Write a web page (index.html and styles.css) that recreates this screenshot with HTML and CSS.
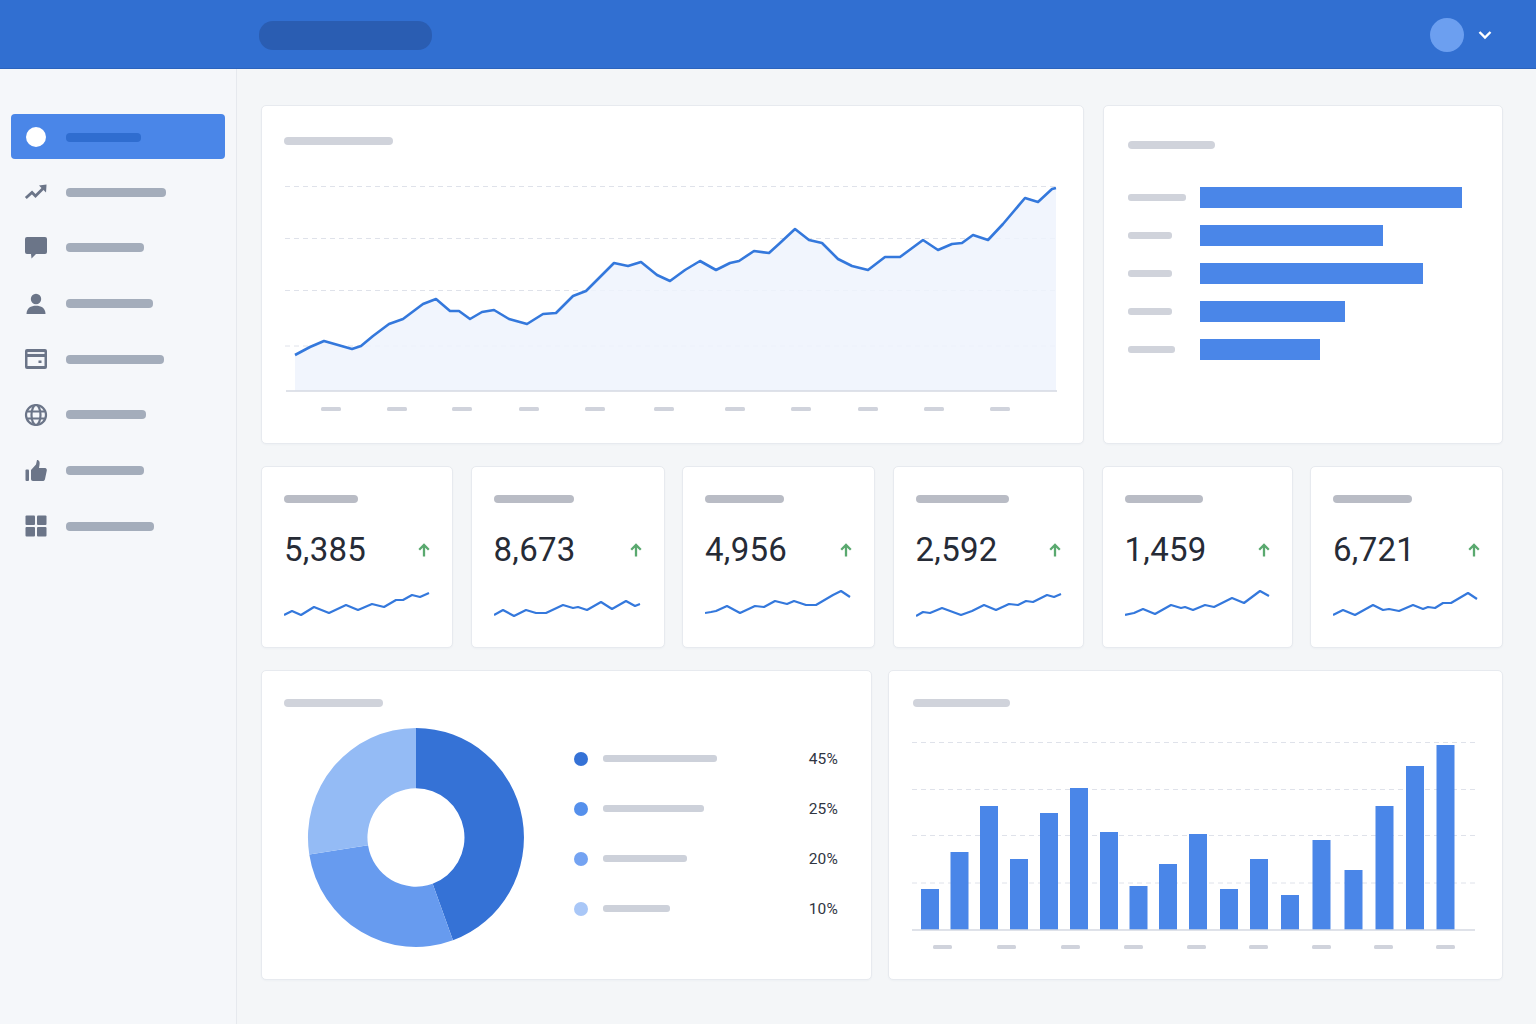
FILE: index.html
```html
<!DOCTYPE HTML><html>
<head>
  <title>Dashboard</title>
  <meta name="viewport" content="width=device-width, initial-scale=1">
  <meta charset="UTF-8">
  <link rel="stylesheet" href="styles.css">
</head>
<body>
  <header class="topbar">
    <div class="search-pill"></div>
    <div class="user">
      <span class="avatar"></span>
      <svg class="chevron" width="14" height="10" viewBox="0 0 14 10"><path d="M1.500 2 L7 7.500 L12.500 2" fill="none" stroke="#fff" stroke-width="2.400"/></svg>
    </div>
  </header>

  <div class="layout">
    <nav class="sidebar">
      <a class="nav-item active"><span class="nav-dot"></span><span class="nav-bar" style="width:75px"></span></a>
      <a class="nav-item">
        <svg class="nav-icon" viewBox="0 0 24 24"><path d="M1.800 18 L8 12.500 L11.500 16 L19 8.500" fill="none" stroke="#6b7588" stroke-width="2.800"/><path d="M15 5.500 L22.500 4.500 L22 12.500Z" fill="#6b7588"/></svg>
        <span class="nav-bar" style="width:100px"></span>
      </a>
      <a class="nav-item">
        <svg class="nav-icon" viewBox="0 0 24 24"><path d="M3 1 H21 A2 2 0 0 1 23 3 V16 A2 2 0 0 1 21 18 H12 L7.500 22.500 L7 18 H3 A2 2 0 0 1 1 16 V3 A2 2 0 0 1 3 1Z" fill="#6b7588"/></svg>
        <span class="nav-bar" style="width:78px"></span>
      </a>
      <a class="nav-item">
        <svg class="nav-icon" viewBox="0 0 24 24"><circle cx="12" cy="7" r="5.200" fill="#6b7588"/><path d="M2.500 22 C2.500 16 7 13.800 12 13.800 C17 13.800 21.500 16 21.500 22Z" fill="#6b7588"/></svg>
        <span class="nav-bar" style="width:87px"></span>
      </a>
      <a class="nav-item">
        <svg class="nav-icon" viewBox="0 0 24 24"><rect x="1" y="2" width="22" height="20" rx="2" fill="#6b7588"/><rect x="3.500" y="5" width="17" height="2" fill="#eef0f4"/><rect x="3.500" y="10" width="17" height="9" fill="#f5f7fa"/><rect x="14.500" y="13.500" width="3" height="2.500" fill="#6b7588"/></svg>
        <span class="nav-bar" style="width:98px"></span>
      </a>
      <a class="nav-item">
        <svg class="nav-icon" viewBox="0 0 24 24" fill="none" stroke="#6b7588" stroke-width="2.200"><circle cx="12" cy="12" r="10"/><ellipse cx="12" cy="12" rx="4.500" ry="10"/><path d="M2.500 8.500 H21.500 M2.500 15.500 H21.500"/></svg>
        <span class="nav-bar" style="width:80px"></span>
      </a>
      <a class="nav-item">
        <svg class="nav-icon" viewBox="0 0 24 24"><rect x="1.500" y="10.500" width="3.500" height="11.500" rx="1" fill="#6b7588"/><path d="M7 11 L12 5.500 L13 1 C15.500 1 16 3.500 15.500 6 L15 9 H21 C22.500 9 23 10.500 22.800 11.500 L21 20 C20.700 21.500 20 22 18.500 22 H9 C7.800 22 7 21.200 7 20Z" fill="#6b7588"/></svg>
        <span class="nav-bar" style="width:78px"></span>
      </a>
      <a class="nav-item">
        <svg class="nav-icon" viewBox="0 0 24 24" fill="#6b7588"><rect x="1.500" y="1.500" width="9.500" height="9.500" rx="1"/><rect x="13" y="1.500" width="9.500" height="9.500" rx="1"/><rect x="1.500" y="13" width="9.500" height="9.500" rx="1"/><rect x="13" y="13" width="9.500" height="9.500" rx="1"/></svg>
        <span class="nav-bar" style="width:88px"></span>
      </a>
    </nav>

    <main class="content">
      <section class="row row-top">
        <div class="card card-line">
          <div class="title-bar" style="width:109px"></div>
          <svg class="chart" width="800" height="250" viewBox="270 170 800 250">
            <g stroke="#dfe2ea" stroke-width="1" stroke-dasharray="5 4">
              <path d="M285 186.500 H1057 M285 238.500 H1057 M285 290.500 H1057 M285 346 H1057"/>
            </g>
            <path fill="#eef3fd" fill-opacity="0.85" d="M295 355 L310 347 L324 341 L338 345 L352 349 L361 346 L373 336 L389 324 L403 319 L423 304 L436 299 L450 311 L459 311 L470 319 L482 312 L494 310 L509 319 L527 324 L543 314 L556 313 L573 296 L586 291 L614 263 L628 266 L641 262 L657 275 L670 281 L685 270 L700 261 L716 270 L730 263 L739 261 L754 251 L769 253 L780 243 L795 229 L809 240 L822 243 L838 259 L852 266 L868 270 L885 257 L900 257 L923 240 L938 250 L952 244 L962 243 L973 235 L988 240 L1003 224 L1025 198 L1038 202 L1052 189 L1056 188 V391 H295Z"/>
            <path fill="none" stroke="#3478dc" stroke-width="2.600" stroke-linejoin="round" d="M295 355 L310 347 L324 341 L338 345 L352 349 L361 346 L373 336 L389 324 L403 319 L423 304 L436 299 L450 311 L459 311 L470 319 L482 312 L494 310 L509 319 L527 324 L543 314 L556 313 L573 296 L586 291 L614 263 L628 266 L641 262 L657 275 L670 281 L685 270 L700 261 L716 270 L730 263 L739 261 L754 251 L769 253 L780 243 L795 229 L809 240 L822 243 L838 259 L852 266 L868 270 L885 257 L900 257 L923 240 L938 250 L952 244 L962 243 L973 235 L988 240 L1003 224 L1025 198 L1038 202 L1052 189 L1056 188"/>
            <path d="M286 391 H1057" stroke="#d5d9e2" stroke-width="1.500"/>
            <g fill="#d0d3dc">
              <rect x="321" y="407" width="20" height="4" rx="1.500"/><rect x="387" y="407" width="20" height="4" rx="1.500"/><rect x="452" y="407" width="20" height="4" rx="1.500"/><rect x="519" y="407" width="20" height="4" rx="1.500"/><rect x="585" y="407" width="20" height="4" rx="1.500"/><rect x="654" y="407" width="20" height="4" rx="1.500"/><rect x="725" y="407" width="20" height="4" rx="1.500"/><rect x="791" y="407" width="20" height="4" rx="1.500"/><rect x="858" y="407" width="20" height="4" rx="1.500"/><rect x="924" y="407" width="20" height="4" rx="1.500"/><rect x="990" y="407" width="20" height="4" rx="1.500"/>
            </g>
          </svg>
        </div>

        <div class="card card-hbars">
          <div class="title-bar" style="width:87px"></div>
          <div class="hbars">
            <div class="hbar-row"><span class="hbar-cell"><span class="hbar-label" style="width:58px"></span></span><span class="hbar" style="width:262px"></span></div>
            <div class="hbar-row"><span class="hbar-cell"><span class="hbar-label" style="width:44px"></span></span><span class="hbar" style="width:183px"></span></div>
            <div class="hbar-row"><span class="hbar-cell"><span class="hbar-label" style="width:44px"></span></span><span class="hbar" style="width:223px"></span></div>
            <div class="hbar-row"><span class="hbar-cell"><span class="hbar-label" style="width:44px"></span></span><span class="hbar" style="width:145px"></span></div>
            <div class="hbar-row"><span class="hbar-cell"><span class="hbar-label" style="width:47px"></span></span><span class="hbar" style="width:120px"></span></div>
          </div>
        </div>
      </section>

      <section class="row row-stats">
        <div class="card stat">
          <div class="stat-label" style="width:74px"></div>
          <div class="stat-main"><span class="stat-num">5,385</span><svg class="arrow" width="12" height="14" viewBox="0 0 12 14"><path d="M6 13.500 V2 M1.200 6.800 L6 2 L10.800 6.800" fill="none" stroke="#5aa96f" stroke-width="2.300"/></svg></div>
          <svg class="spark" width="150" height="32" viewBox="0 0 150 32"><polyline points="0,27 8,23 17,27 30,19 45,25 62,17 74,22 88,16 100,19 112,12 119,12 128,7 136,9 145,5"/></svg>
        </div>
        <div class="card stat">
          <div class="stat-label" style="width:80px"></div>
          <div class="stat-main"><span class="stat-num">8,673</span><svg class="arrow" width="12" height="14" viewBox="0 0 12 14"><path d="M6 13.500 V2 M1.200 6.800 L6 2 L10.800 6.800" fill="none" stroke="#5aa96f" stroke-width="2.300"/></svg></div>
          <svg class="spark" width="150" height="32" viewBox="0 0 150 32"><polyline points="0,27 9,22 20,28 32,22 42,25 52,25 69,17 79,20 84,19 93,22 107,14 118,21 132,13 141,18 146,16"/></svg>
        </div>
        <div class="card stat">
          <div class="stat-label" style="width:79px"></div>
          <div class="stat-main"><span class="stat-num">4,956</span><svg class="arrow" width="12" height="14" viewBox="0 0 12 14"><path d="M6 13.500 V2 M1.200 6.800 L6 2 L10.800 6.800" fill="none" stroke="#5aa96f" stroke-width="2.300"/></svg></div>
          <svg class="spark" width="150" height="32" viewBox="0 0 150 32"><polyline points="0,25 6,24 11,23 22,18 35,25 50,18 59,19 70,13 82,16 89,13 101,17 111,17 128,7 136,3 145,9"/></svg>
        </div>
        <div class="card stat">
          <div class="stat-label" style="width:93px"></div>
          <div class="stat-main"><span class="stat-num">2,592</span><svg class="arrow" width="12" height="14" viewBox="0 0 12 14"><path d="M6 13.500 V2 M1.200 6.800 L6 2 L10.800 6.800" fill="none" stroke="#5aa96f" stroke-width="2.300"/></svg></div>
          <svg class="spark" width="150" height="32" viewBox="0 0 150 32"><polyline points="0,28 7,24 14,25 26,20 45,27 56,23 68,17 80,22 93,16 102,17 110,13 117,14 131,7 138,9 145,6"/></svg>
        </div>
        <div class="card stat">
          <div class="stat-label" style="width:78px"></div>
          <div class="stat-main"><span class="stat-num">1,459</span><svg class="arrow" width="12" height="14" viewBox="0 0 12 14"><path d="M6 13.500 V2 M1.200 6.800 L6 2 L10.800 6.800" fill="none" stroke="#5aa96f" stroke-width="2.300"/></svg></div>
          <svg class="spark" width="150" height="32" viewBox="0 0 150 32"><polyline points="0,27 9,25 18,21 30,26 46,17 56,20 60,19 68,22 80,17 89,19 107,10 119,15 135,3 144,8"/></svg>
        </div>
        <div class="card stat">
          <div class="stat-label" style="width:79px"></div>
          <div class="stat-main"><span class="stat-num">6,721</span><svg class="arrow" width="12" height="14" viewBox="0 0 12 14"><path d="M6 13.500 V2 M1.200 6.800 L6 2 L10.800 6.800" fill="none" stroke="#5aa96f" stroke-width="2.300"/></svg></div>
          <svg class="spark" width="150" height="32" viewBox="0 0 150 32"><polyline points="0,27 10,22 22,27 40,17 50,22 56,21 66,23 80,17 90,21 95,19 102,20 110,15 118,15 135,5 144,11"/></svg>
        </div>
      </section>

      <section class="row row-bottom">
        <div class="card card-donut">
          <div class="title-bar" style="width:99px"></div>
          <div class="donut-wrap">
            <svg class="donut" width="218" height="221" viewBox="0 0 220 220" preserveAspectRatio="none">
              <path fill="#3572d6" d="M110 1 A109 109 0 0 1 147.300 212.400 L126.800 156 A49 49 0 0 0 110 61Z"/>
              <path fill="#679bef" d="M147.300 212.400 A109 109 0 0 1 2.300 127 L61.600 117.700 A49 49 0 0 0 126.800 156Z"/>
              <path fill="#94bbf5" d="M2.300 127 A109 109 0 0 1 110 1 L110 61 A49 49 0 0 0 61.600 117.700Z"/>
            </svg>
            <ul class="legend">
              <li><span class="dot dot-1"></span><span class="legend-bar" style="width:114px"></span><span class="pct">45%</span></li>
              <li><span class="dot dot-2"></span><span class="legend-bar" style="width:101px"></span><span class="pct">25%</span></li>
              <li><span class="dot dot-3"></span><span class="legend-bar" style="width:84px"></span><span class="pct">20%</span></li>
              <li><span class="dot dot-4"></span><span class="legend-bar" style="width:67px"></span><span class="pct">10%</span></li>
            </ul>
          </div>
        </div>

        <div class="card card-bars">
          <div class="title-bar" style="width:97px"></div>
          <svg class="chart" width="580" height="230" viewBox="905 725 580 230">
            <g stroke="#dfe2ea" stroke-width="1" stroke-dasharray="5 4">
              <path d="M912 742.500 H1475 M912 789.500 H1475 M912 835.500 H1475 M912 883 H1475"/>
            </g>
            <g fill="#4a86e8">
              <rect x="921" y="889" width="18" height="41"/><rect x="950.500" y="852" width="18" height="78"/><rect x="980" y="806" width="18" height="124"/><rect x="1010" y="859" width="18" height="71"/><rect x="1040" y="813" width="18" height="117"/><rect x="1070" y="788" width="18" height="142"/><rect x="1100" y="832" width="18" height="98"/><rect x="1129.500" y="886" width="18" height="44"/><rect x="1159" y="864" width="18" height="66"/><rect x="1189" y="834" width="18" height="96"/><rect x="1220" y="889" width="18" height="41"/><rect x="1250" y="859" width="18" height="71"/><rect x="1281" y="895" width="18" height="35"/><rect x="1312.500" y="840" width="18" height="90"/><rect x="1344.500" y="870" width="18" height="60"/><rect x="1375.500" y="806" width="18" height="124"/><rect x="1406" y="766" width="18" height="164"/><rect x="1436.500" y="745" width="18" height="185"/>
            </g>
            <path d="M912 930 H1475" stroke="#d5d9e2" stroke-width="1.500"/>
            <g fill="#d0d3dc">
              <rect x="933" y="945" width="19" height="4" rx="1.500"/><rect x="997" y="945" width="19" height="4" rx="1.500"/><rect x="1061" y="945" width="19" height="4" rx="1.500"/><rect x="1124" y="945" width="19" height="4" rx="1.500"/><rect x="1187" y="945" width="19" height="4" rx="1.500"/><rect x="1249" y="945" width="19" height="4" rx="1.500"/><rect x="1312" y="945" width="19" height="4" rx="1.500"/><rect x="1374" y="945" width="19" height="4" rx="1.500"/><rect x="1436" y="945" width="19" height="4" rx="1.500"/>
            </g>
          </svg>
        </div>
      </section>
    </main>
  </div>
</body>
</html>
```

FILE: styles.css
```css
html {font-family: Roboto, "Liberation Sans", sans-serif;}
body {margin: 0; background: #f4f6f8; color: #262b36;}

.topbar {
	height: 68px;
	background: #316fd1;
	border-bottom: 1px solid #2b63bd;
	display: flex;
	align-items: center;
	justify-content: space-between;
	padding: 0 44px 0 259px;
}
.search-pill {width: 173px; height: 29px; margin-top: 2px; border-radius: 14px; background: #2a5db2;}
.user {display: flex; align-items: center; gap: 14.5px; margin-top: 2px;}
.avatar {width: 34px; height: 34px; border-radius: 50%; background: #6c9ff0;}

.layout {display: flex; height: 955px;}

.sidebar {
	width: 214px;
	padding: 45px 11px 0;
	background: #f5f7fa;
	border-right: 1px solid #e6e9ee;
	display: flex;
	flex-direction: column;
	gap: 10.7px;
}
.nav-item {height: 45px; display: flex; align-items: center; gap: 18px; padding-left: 13px; border-radius: 4px;}
.nav-item.active {background: #4a86e8;}
.nav-icon {width: 24px; height: 24px; flex: none;}
.nav-dot {width: 20px; height: 20px; margin: 0 2.5px 0 1.5px; border-radius: 50%; background: #fff; flex: none;}
.nav-bar {height: 9px; border-radius: 4px; background: #a4adbb;}
.active .nav-bar {background: #2f6dd0; margin-top: 1px;}

.content {flex: 1; padding: 36px 33px 0 24px; display: flex; flex-direction: column; gap: 22px;}
.row {display: grid;}
.row-top {grid-template-columns: 823px 400px; gap: 19px; height: 339px;}
.row-stats {grid-template-columns: 192px 194px 193px 191.5px 191px 193px; gap: 17.5px; height: 182px;}
.row-bottom {grid-template-columns: 611px 615px; gap: 16px; height: 310px;}

.card {
	background: #fff;
	border: 1px solid #e7eaef;
	border-radius: 5px;
	box-sizing: border-box;
	box-shadow: 0 1px 2px rgba(30, 50, 90, 0.03);
}
.title-bar {height: 8px; border-radius: 4px; background: #d0d3db;}
.chart {display: block;}

.card-line {padding: 31px 22px 0;}
.card-line .chart {margin: 25px 0 0 -14px;}

.card-hbars {padding: 35px 24px 0;}
.hbars {display: flex; flex-direction: column; gap: 17px; margin-top: 38px;}
.hbar-row {display: flex; align-items: center; height: 21px;}
.hbar-cell {width: 72px; flex: none;}
.hbar-label {display: block; height: 7px; border-radius: 3px; background: #d0d3db;}
.hbar {background: #4a86e8; height: 21px;}

.stat {padding: 28px 22px 0;}
.stat-label {height: 8px; border-radius: 4px; background: #b9bcc5;}
.stat-main {display: flex; align-items: center; justify-content: space-between; margin-top: 27px; height: 40px;}
.stat-num {font-size: 33px; line-height: 40px; letter-spacing: 0.3px; color: #262b36;}
.spark {display: block; margin-top: 18px;}
.spark polyline {fill: none; stroke: #3478dc; stroke-width: 2.200; stroke-linejoin: round;}

.card-donut {padding: 28px 22px 0;}
.donut-wrap {display: flex; align-items: center; margin-top: 20px;}
.donut {margin-left: 23px; flex: none;}
.legend {list-style: none; margin: 0 11px 8px 49px; padding: 0; flex: 1; display: flex; flex-direction: column; gap: 30px;}
.legend li {display: flex; align-items: center; height: 20px;}
.dot {width: 14px; height: 14px; border-radius: 50%; margin-right: 15px;}
.dot-1 {background: #3572d6;}
.dot-2 {background: #5590ec;}
.dot-3 {background: #74a3f2;}
.dot-4 {background: #a9c7f7;}
.legend-bar {height: 7px; border-radius: 3px; background: #cdd1da;}
.pct {margin-left: auto; font-size: 15.5px; letter-spacing: 0.2px; color: #2f3542;}

.card-bars {padding: 28px 24px 0;}
.card-bars .chart {margin: 18px 0 0 -8px;}
```
